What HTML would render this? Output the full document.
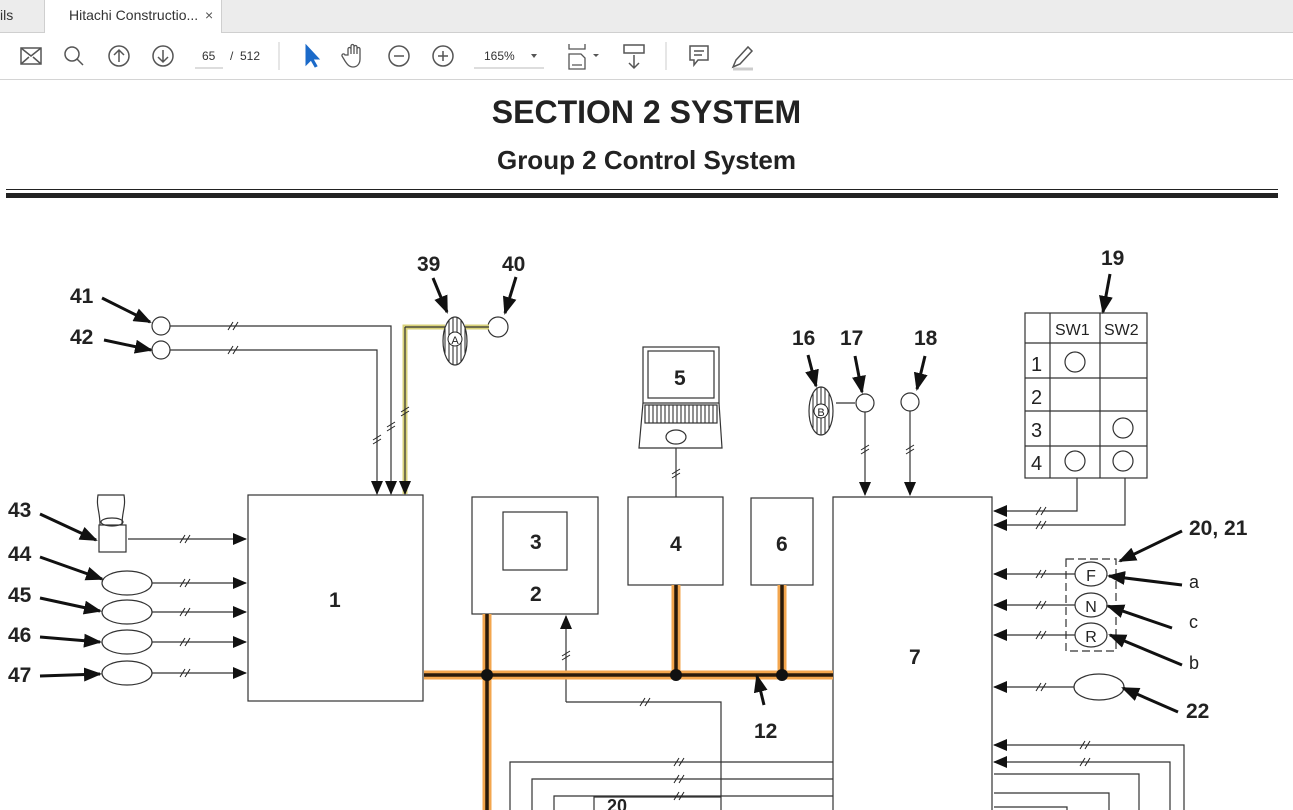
<!DOCTYPE html>
<html><head><meta charset="utf-8"><style>
*{margin:0;padding:0;box-sizing:border-box}
body{width:1293px;height:810px;overflow:hidden;background:#fff;font-family:"Liberation Sans",sans-serif;position:relative}
.tabs{position:absolute;left:0;top:0;width:1293px;height:33px;background:#ececec;border-bottom:1px solid #cfcfcf}
.tab1{position:absolute;left:0;top:0;width:44px;height:33px;font-size:14px;color:#333;line-height:31px}
.tab2{position:absolute;left:44px;top:0;width:178px;height:34px;background:#fff;border-left:1px solid #cfcfcf;border-right:1px solid #cfcfcf;font-size:14px;color:#333;line-height:31px;padding-left:24px}
.tool{position:absolute;left:0;top:33px;width:1293px;height:47px;background:#fff;border-bottom:1px solid #d4d4d4}
</style></head><body>
<div class="tabs"><div class="tab1">ils</div><div class="tab2">Hitachi Constructio... <span style="position:absolute;left:160px;color:#555">×</span></div></div>
<div class="tool">
<svg width="1293" height="47" style="position:absolute;left:0;top:0" fill="none" stroke="#555" stroke-width="1.5">
<rect x="21" y="15" width="20" height="16"/><path d="M21 15l10 8 10-8M21 31l8-7M41 31l-8-7"/>
<circle cx="72" cy="21" r="7"/><path d="M77 26l6 6"/>
<circle cx="119" cy="23" r="10"/><path d="M119 29v-12M114 22l5-5 5 5"/>
<circle cx="163" cy="23" r="10"/><path d="M163 17v12M158 24l5 5 5-5"/>
<path d="M195 35h28" stroke="#bbb" stroke-width="1"/>
<path d="M279 9v28M666 9v28" stroke="#ccc" stroke-width="1"/>
<path d="M306 12l0 20 5-5 4 7 2-1-4-7 6 0z" fill="#1b6ac9" stroke="#1b6ac9" stroke-width="1"/>
<path d="M348 22v-6a1.5 1.5 0 013 0v5v-8a1.5 1.5 0 013 0v8v-7a1.5 1.5 0 013 0v7v-5a1.5 1.5 0 013 0v10c0 5-3 8-7 8s-6-3-8-6l-3-5a1.5 1.5 0 013-1z" stroke-width="1.3"/>
<circle cx="399" cy="23" r="10"/><path d="M394 23h10"/>
<circle cx="443" cy="23" r="10"/><path d="M438 23h10M443 18v10"/>
<path d="M474 35h70" stroke="#bbb" stroke-width="1"/>
<path d="M531 21l3 4 3-4z" fill="#555" stroke="none"/>
<path d="M569 11v5h16v-5M569 36v-15h12l4 4v11z M572 32h10" stroke-width="1.3"/>
<path d="M593 21l3 3 3-3z" fill="#555" stroke="none"/>
<rect x="624" y="12" width="20" height="8"/><path d="M634 22v13M629 30l5 5 5-5"/>
<path d="M690 13h18v14h-10l-4 5v-5h-4z M694 18h10M694 22h8"/>
<path d="M733 34l3-7 12-13 4 4-12 13z" /><path d="M733 36h20" stroke="#ccc" stroke-width="3"/>
</svg>
<span style="position:absolute;left:202px;top:16px;font-size:12px;color:#333">65</span>
<span style="position:absolute;left:230px;top:16px;font-size:12px;color:#333">/&nbsp;&nbsp;512</span>
<span style="position:absolute;left:484px;top:16px;font-size:12px;color:#333">165%</span>
</div>
<div style="position:absolute;left:0;top:94px;width:1293px;text-align:center;font-weight:bold;font-size:32px;color:#222">SECTION 2 SYSTEM</div>
<div style="position:absolute;left:0;top:145px;width:1293px;text-align:center;font-weight:bold;font-size:26px;color:#222">Group 2 Control System</div>
<div style="position:absolute;left:6px;top:189px;width:1272px;height:1px;background:#222"></div>
<div style="position:absolute;left:6px;top:193px;width:1272px;height:5px;background:#222"></div>
<svg width="1293" height="810" style="position:absolute;left:0;top:0" font-family="Liberation Sans, sans-serif" font-weight="bold" font-size="21" fill="#222">
<defs>
<marker id="a" markerWidth="14" markerHeight="12" refX="13" refY="6" orient="auto" markerUnits="userSpaceOnUse"><path d="M0 0L14 6L0 12z" fill="#111"/></marker>
<marker id="b" markerWidth="18" markerHeight="14" refX="16" refY="7" orient="auto" markerUnits="userSpaceOnUse"><path d="M0 0L18 7L0 14z" fill="#111"/></marker>
<pattern id="st" width="4" height="4" patternUnits="userSpaceOnUse"><path d="M1 0v4" stroke="#222" stroke-width="1"/></pattern>
</defs>
<g fill="none" stroke="#333" stroke-width="1.2">
<rect x="248" y="495" width="175" height="206"/>
<rect x="472" y="497" width="126" height="117"/>
<rect x="503" y="512" width="64" height="58"/>
<rect x="628" y="497" width="95" height="88"/>
<rect x="751" y="498" width="62" height="87"/>
<path d="M833 810V497h159v313"/>
<circle cx="161" cy="326" r="9"/><circle cx="161" cy="350" r="9"/>
<circle cx="498" cy="327" r="10"/>
<ellipse cx="127" cy="583" rx="25" ry="12"/><ellipse cx="127" cy="612" rx="25" ry="12"/><ellipse cx="127" cy="642" rx="25" ry="12"/><ellipse cx="127" cy="673" rx="25" ry="12"/>
<path d="M100 525c0-14-4-18-2-30h26c2 12-2 16-2 30" /><rect x="99" y="525" width="27" height="27"/><ellipse cx="112" cy="522" rx="11" ry="4"/>
<rect x="643" y="347" width="76" height="56"/><rect x="648" y="351" width="66" height="47"/>
<path d="M643 403l-4 45h83l-3-45"/><rect x="645" y="405" width="72" height="18" fill="url(#st)"/>
<ellipse cx="676" cy="437" rx="10" ry="7"/>
<path d="M676 448v49"/>
<path d="M566 702h155v108"/>
<path d="M836 403h19"/>
<circle cx="865" cy="403" r="9"/><circle cx="910" cy="402" r="9"/>
<rect x="1025" y="313" width="122" height="165"/>
<path d="M1050 313v165M1100 313v165M1025 343h122M1025 378h122M1025 411h122M1025 446h122"/>
<circle cx="1075" cy="362" r="10"/><circle cx="1123" cy="428" r="10"/><circle cx="1075" cy="461" r="10"/><circle cx="1123" cy="461" r="10"/>
<rect x="1066" y="559" width="50" height="92" stroke-dasharray="8 4"/>
<ellipse cx="1091" cy="574" rx="16" ry="12"/><ellipse cx="1091" cy="605" rx="16" ry="12"/><ellipse cx="1091" cy="635" rx="16" ry="12"/>
<ellipse cx="1099" cy="687" rx="25" ry="13"/>
<path d="M994 774h145v36M994 793h115v17M1067 810v-3h-73"/>
<path d="M833 762H510v48M833 779H532v48M833 796H554v14M594 810v-13h127"/>
</g>
<g fill="none" stroke="#333" stroke-width="1.2" marker-end="url(#a)">
<path d="M170 326h221v168"/>
<path d="M170 350h207v144"/>
<path d="M128 539h118"/>
<path d="M152 583h94"/><path d="M152 612h94"/><path d="M152 642h94"/><path d="M152 673h94"/>
<path d="M566 702V616"/>
<path d="M865 412v83"/><path d="M910 411v84"/>
<path d="M1077 478v33h-83"/><path d="M1125 478v47h-131"/>
<path d="M1075 574h-81"/><path d="M1075 605h-81"/><path d="M1075 635h-81"/>
<path d="M1074 687h-80"/><path d="M1184 810V745h-190"/><path d="M1170 810V762h-176"/>
</g>
<path d="M405 494V327h40M465 327h24" fill="none" stroke="#d8d27a" stroke-width="5"/>
<path d="M405 327h40M465 327h24" fill="none" stroke="#333" stroke-width="1.2"/>
<path d="M405 327v167" stroke="#333" stroke-width="1.2" marker-end="url(#a)"/>
<ellipse cx="455" cy="341" rx="12" ry="24" fill="url(#st)" stroke="#333" stroke-width="1.2"/>
<circle cx="455" cy="339" r="7" fill="#fff" stroke="#222"/><text x="455" y="344" font-size="11" text-anchor="middle" font-weight="normal">A</text>
<ellipse cx="821" cy="411" rx="12" ry="24" fill="url(#st)" stroke="#333" stroke-width="1.2"/>
<circle cx="821" cy="411" r="7" fill="#fff" stroke="#222"/><text x="821" y="416" font-size="11" text-anchor="middle" font-weight="normal">B</text>
<g fill="none" stroke="#f3a64e" stroke-width="9">
<path d="M424 675h409M487 614v196M676 585v90M782 585v90"/></g>
<g fill="none" stroke="#2a1a0a" stroke-width="3.5">
<path d="M424 675h409M487 614v196M676 585v90M782 585v90"/></g>
<circle cx="487" cy="675" r="6" fill="#111"/><circle cx="676" cy="675" r="6" fill="#111"/><circle cx="782" cy="675" r="6" fill="#111"/>
<g stroke="#222" stroke-width="1" fill="none">
<path d="M228 330l5-8M233 330l5-8M228 354l5-8M233 354l5-8M180 543l5-8M185 543l5-8M180 587l5-8M185 587l5-8M180 616l5-8M185 616l5-8M180 646l5-8M185 646l5-8M180 677l5-8M185 677l5-8"/>
<path d="M373 440l8-5M373 444l8-5M387 427l8-5M387 431l8-5M401 412l8-5M401 416l8-5M672 474l8-5M672 478l8-5M861 450l8-5M861 454l8-5M906 450l8-5M906 454l8-5M562 656l8-5M562 660l8-5"/>
<path d="M640 706l5-8M645 706l5-8M1036 515l5-8M1041 515l5-8M1036 529l5-8M1041 529l5-8M1036 578l5-8M1041 578l5-8M1036 609l5-8M1041 609l5-8M1036 639l5-8M1041 639l5-8M1036 691l5-8M1041 691l5-8M1080 749l5-8M1085 749l5-8M1080 766l5-8M1085 766l5-8M674 766l5-8M679 766l5-8M674 783l5-8M679 783l5-8M674 800l5-8M679 800l5-8"/>
</g>
<g stroke="#111" stroke-width="3" fill="none" marker-end="url(#b)">
<path d="M102 298l48 24"/><path d="M104 340l47 10"/><path d="M40 514l56 26"/><path d="M40 557l62 22"/><path d="M40 598l60 13"/><path d="M40 637l60 5"/><path d="M40 676l60 -2"/>
<path d="M433 278l14 34"/><path d="M516 277l-11 36"/><path d="M1110 274l-7 38"/><path d="M808 355l8 31"/><path d="M855 356l7 36"/><path d="M925 356l-8 33"/>
<path d="M1182 531l-62 30"/><path d="M1182 585l-73 -9"/><path d="M1172 628l-64 -22"/><path d="M1182 665l-72 -30"/><path d="M1178 712l-55 -24"/><path d="M764 705l-7 -29"/>
</g>
<text x="70" y="303">41</text><text x="70" y="344">42</text><text x="417" y="271">39</text><text x="502" y="271">40</text>
<text x="8" y="517">43</text><text x="8" y="561">44</text><text x="8" y="602">45</text><text x="8" y="642">46</text><text x="8" y="682">47</text>
<text x="1101" y="265">19</text><text x="792" y="345">16</text><text x="840" y="345">17</text><text x="914" y="345">18</text>
<text x="674" y="385">5</text><text x="530" y="549">3</text><text x="530" y="601">2</text><text x="329" y="607">1</text>
<text x="670" y="551">4</text><text x="776" y="551">6</text><text x="909" y="664">7</text><text x="754" y="738">12</text>
<text x="1189" y="535">20, 21</text><text x="1186" y="718">22</text><text x="607" y="812" font-size="18">20</text>
<g font-weight="normal" font-size="18"><text x="1189" y="588">a</text><text x="1189" y="628">c</text><text x="1189" y="669">b</text>
<text x="1091" y="581" font-size="16" text-anchor="middle">F</text><text x="1091" y="612" font-size="16" text-anchor="middle">N</text><text x="1091" y="642" font-size="16" text-anchor="middle">R</text>
<text x="1055" y="335" font-size="16">SW1</text><text x="1104" y="335" font-size="16">SW2</text>
<text x="1031" y="371" font-size="20">1</text><text x="1031" y="404" font-size="20">2</text><text x="1031" y="437" font-size="20">3</text><text x="1031" y="470" font-size="20">4</text></g>
</svg>
</body></html>
